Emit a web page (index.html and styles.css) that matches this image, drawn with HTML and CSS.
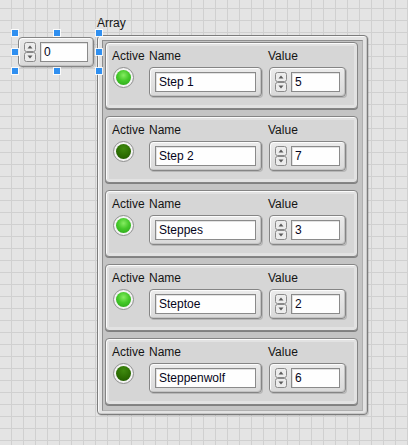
FILE: index.html
```html
<!DOCTYPE html>
<html>
<head>
<meta charset="utf-8">
<link rel="stylesheet" href="styles.css">
</head>
<body>
<div class="panel">
  <div class="index-col">
    <div class="index">
      <div class="ctl num idx">
        <svg class="spin" width="12" height="20" viewBox="0 0 12 20"><rect x="0.5" y="0.5" width="11" height="9" rx="2" fill="#ececec" stroke="#8a8a8a"/><rect x="0.5" y="10.5" width="11" height="9" rx="2" fill="#ececec" stroke="#8a8a8a"/><path d="M3.5 6.5 L6 3.5 L8.5 6.5Z" fill="#5a5a5a"/><path d="M3.5 13.5 L6 16.5 L8.5 13.5Z" fill="#5a5a5a"/></svg>
        <div class="field">0</div>
      </div>
      <span class="handle" style="left:-6px;top:-7px"></span>
      <span class="handle" style="left:36px;top:-7px"></span>
      <span class="handle" style="left:78px;top:-7px"></span>
      <span class="handle" style="left:-6px;top:12px"></span>
      <span class="handle" style="left:78px;top:12px"></span>
      <span class="handle" style="left:-6px;top:31px"></span>
      <span class="handle" style="left:36px;top:31px"></span>
      <span class="handle" style="left:78px;top:31px"></span>
    </div>
  </div>
  <div class="array-col">
    <div class="label array-label">Array</div>
    <div class="array-frame">
      <div class="array-inner">
        <div class="cluster">
          <div class="col col-led"><div class="label">Active</div><div class="led on"><i></i></div></div>
          <div class="col col-name"><div class="label">Name</div><div class="ctl str"><div class="field">Step 1</div></div></div>
          <div class="col col-val"><div class="label val-label">Value</div><div class="ctl num"><svg class="spin" width="12" height="20" viewBox="0 0 12 20"><rect x="0.5" y="0.5" width="11" height="9" rx="2" fill="#ececec" stroke="#8a8a8a"/><rect x="0.5" y="10.5" width="11" height="9" rx="2" fill="#ececec" stroke="#8a8a8a"/><path d="M3.5 6.5 L6 3.5 L8.5 6.5Z" fill="#5a5a5a"/><path d="M3.5 13.5 L6 16.5 L8.5 13.5Z" fill="#5a5a5a"/></svg><div class="field">5</div></div></div>
        </div>
        <div class="cluster">
          <div class="col col-led"><div class="label">Active</div><div class="led off"><i></i></div></div>
          <div class="col col-name"><div class="label">Name</div><div class="ctl str"><div class="field">Step 2</div></div></div>
          <div class="col col-val"><div class="label val-label">Value</div><div class="ctl num"><svg class="spin" width="12" height="20" viewBox="0 0 12 20"><rect x="0.5" y="0.5" width="11" height="9" rx="2" fill="#ececec" stroke="#8a8a8a"/><rect x="0.5" y="10.5" width="11" height="9" rx="2" fill="#ececec" stroke="#8a8a8a"/><path d="M3.5 6.5 L6 3.5 L8.5 6.5Z" fill="#5a5a5a"/><path d="M3.5 13.5 L6 16.5 L8.5 13.5Z" fill="#5a5a5a"/></svg><div class="field">7</div></div></div>
        </div>
        <div class="cluster">
          <div class="col col-led"><div class="label">Active</div><div class="led on"><i></i></div></div>
          <div class="col col-name"><div class="label">Name</div><div class="ctl str"><div class="field">Steppes</div></div></div>
          <div class="col col-val"><div class="label val-label">Value</div><div class="ctl num"><svg class="spin" width="12" height="20" viewBox="0 0 12 20"><rect x="0.5" y="0.5" width="11" height="9" rx="2" fill="#ececec" stroke="#8a8a8a"/><rect x="0.5" y="10.5" width="11" height="9" rx="2" fill="#ececec" stroke="#8a8a8a"/><path d="M3.5 6.5 L6 3.5 L8.5 6.5Z" fill="#5a5a5a"/><path d="M3.5 13.5 L6 16.5 L8.5 13.5Z" fill="#5a5a5a"/></svg><div class="field">3</div></div></div>
        </div>
        <div class="cluster">
          <div class="col col-led"><div class="label">Active</div><div class="led on"><i></i></div></div>
          <div class="col col-name"><div class="label">Name</div><div class="ctl str"><div class="field">Steptoe</div></div></div>
          <div class="col col-val"><div class="label val-label">Value</div><div class="ctl num"><svg class="spin" width="12" height="20" viewBox="0 0 12 20"><rect x="0.5" y="0.5" width="11" height="9" rx="2" fill="#ececec" stroke="#8a8a8a"/><rect x="0.5" y="10.5" width="11" height="9" rx="2" fill="#ececec" stroke="#8a8a8a"/><path d="M3.5 6.5 L6 3.5 L8.5 6.5Z" fill="#5a5a5a"/><path d="M3.5 13.5 L6 16.5 L8.5 13.5Z" fill="#5a5a5a"/></svg><div class="field">2</div></div></div>
        </div>
        <div class="cluster">
          <div class="col col-led"><div class="label">Active</div><div class="led off"><i></i></div></div>
          <div class="col col-name"><div class="label">Name</div><div class="ctl str"><div class="field">Steppenwolf</div></div></div>
          <div class="col col-val"><div class="label val-label">Value</div><div class="ctl num"><svg class="spin" width="12" height="20" viewBox="0 0 12 20"><rect x="0.5" y="0.5" width="11" height="9" rx="2" fill="#ececec" stroke="#8a8a8a"/><rect x="0.5" y="10.5" width="11" height="9" rx="2" fill="#ececec" stroke="#8a8a8a"/><path d="M3.5 6.5 L6 3.5 L8.5 6.5Z" fill="#5a5a5a"/><path d="M3.5 13.5 L6 16.5 L8.5 13.5Z" fill="#5a5a5a"/></svg><div class="field">6</div></div></div>
        </div>
      </div>
    </div>
  </div>
</div>
</body>
</html>
```

FILE: styles.css
```css
html, body {
  margin: 0;
  padding: 0;
}
body {
  width: 408px;
  height: 445px;
  overflow: hidden;
  background-color: #e4e4e4;
  background-image:
    linear-gradient(90deg, #d0d0d0 1px, transparent 1px),
    linear-gradient(#d0d0d0 1px, transparent 1px);
  background-size: 12px 12px;
  background-position: 11px 8px;
  font-family: "Liberation Sans", Arial, sans-serif;
  font-size: 12px;
  color: #141414;
}
.panel {
  display: flex;
  align-items: flex-start;
  padding: 16px 0 0 18px;
}
.index-col {
  margin-top: 21px;
}
.index {
  position: relative;
  width: 76px;
  height: 30px;
}
.handle {
  position: absolute;
  width: 6px;
  height: 6px;
  background: #2f8ff0;
  outline: 1px solid rgba(255,255,255,0.85);
}
.array-col {
  margin-left: 3px;
}
.label {
  line-height: 14px;
  height: 14px;
  white-space: nowrap;
  color: #141414;
}
.array-frame {
  margin-top: 5px;
  box-sizing: border-box;
  width: 271px;
  height: 380px;
  border: 1px solid #7c7c7c;
  border-radius: 4px;
  background: #e3e3e3;
  box-shadow: inset 1px 1px 0 #f7f7f7, inset -1px -1px 0 #c8c8c8, 1px 1px 0 rgba(0,0,0,0.12);
  padding: 4px 4px 3px 4px;
}
.array-inner {
  box-sizing: border-box;
  height: 100%;
  border: 1px solid;
  border-color: #8e8e8e #b0b0b0 #b0b0b0 #8e8e8e;
  background: #c4c4c4;
  padding: 1px 4px 0 2px;
  display: flex;
  flex-direction: column;
  gap: 7px;
}
.cluster {
  box-sizing: border-box;
  width: 253px;
  height: 67px;
  border: 1px solid #858585;
  border-radius: 4px;
  background: #d6d6d6;
  box-shadow: inset 1px 1px 0 #fbfbfb, inset 0 0 0 3px #e2e2e2, 0 1px 0 #808080;
  display: flex;
  padding: 6px 0 0 6px;
}
.col {
  display: flex;
  flex-direction: column;
  gap: 4px;
}
.col-led {
  width: 37px;
}
.col-name {
  width: 113px;
  margin-right: 7px;
}
.val-label {
  margin-left: -1px;
}
.led {
  box-sizing: border-box;
  width: 21px;
  height: 21px;
  margin-left: 1px;
  border-radius: 50%;
  border: 1px solid #8e8e8e;
  background: #f3f3f3;
  padding: 2px;
}
.led i {
  display: block;
  width: 100%;
  height: 100%;
  border-radius: 50%;
}
.led.on i {
  background: radial-gradient(circle at 50% 35%, #86ec62 0%, #45c92a 45%, #25a016 100%);
}
.led.off i {
  background: radial-gradient(circle at 50% 30%, #3f8a0e 0%, #2c6e02 55%, #1d5200 100%);
}
.ctl {
  box-sizing: border-box;
  height: 30px;
  border: 1px solid #858585;
  border-radius: 4px;
  background: linear-gradient(#ebebeb, #d9d9d9);
  box-shadow: inset 1px 1px 0 #fcfcfc, inset -1px -1px 0 #c3c3c3, 1px 1px 0 rgba(0,0,0,0.15);
  padding: 4px 5px;
  display: flex;
  gap: 4px;
}
.str {
  width: 113px;
}
.num {
  width: 77px;
}
.num.idx {
  width: 76px;
}
.spin {
  display: block;
  flex: none;
}
.field {
  box-sizing: border-box;
  flex: 1;
  height: 20px;
  border: 1px solid #8a8a8a;
  background: #fefefe;
  box-shadow: inset 1px 1px 0 #e2e2e2;
  line-height: 18px;
  padding-left: 3px;
  color: #050520;
  white-space: nowrap;
  overflow: hidden;
}
```
